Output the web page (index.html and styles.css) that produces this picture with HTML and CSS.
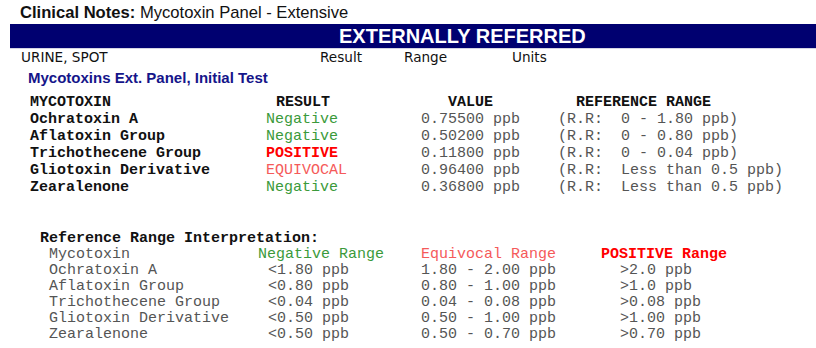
FILE: index.html
```html
<!DOCTYPE html>
<html>
<head>
<meta charset="utf-8">
<link rel="stylesheet" href="styles.css">
</head>
<body>
<div class="title"><b>Clinical Notes:</b> Mycotoxin Panel - Extensive</div>
<div class="banner">EXTERNALLY REFERRED</div>
<div class="specimen">
  <span>URINE, SPOT</span><span>Result</span><span>Range</span><span>Units</span>
</div>
<div class="panel-name">Mycotoxins Ext. Panel, Initial Test</div>

<div class="results">
  <div class="hd">MYCOTOXIN</div><div class="hd hd-result">RESULT</div><div class="hd hd-value">VALUE</div><div class="hd hd-ref">REFERENCE RANGE</div>

  <div class="name">Ochratoxin A</div><div class="neg">Negative</div><div class="val">0.75500 ppb</div><div class="val">(R.R:  0 - 1.80 ppb)</div>
  <div class="name">Aflatoxin Group</div><div class="neg">Negative</div><div class="val">0.50200 ppb</div><div class="val">(R.R:  0 - 0.80 ppb)</div>
  <div class="name">Trichothecene Group</div><div class="pos">POSITIVE</div><div class="val">0.11800 ppb</div><div class="val">(R.R:  0 - 0.04 ppb)</div>
  <div class="name">Gliotoxin Derivative</div><div class="equ">EQUIVOCAL</div><div class="val">0.96400 ppb</div><div class="val">(R.R:  Less than 0.5 ppb)</div>
  <div class="name">Zearalenone</div><div class="neg">Negative</div><div class="val">0.36800 ppb</div><div class="val">(R.R:  Less than 0.5 ppb)</div>
</div>

<div class="interp-title">Reference Range Interpretation:</div>
<div class="interp">
  <div class="g">Mycotoxin</div><div class="neg">Negative Range</div><div class="equ">Equivocal Range</div><div class="pos">POSITIVE Range</div>

  <div class="g">Ochratoxin A</div><div class="g ind1">&lt;1.80 ppb</div><div class="g">1.80 - 2.00 ppb</div><div class="g ind2">&gt;2.0 ppb</div>
  <div class="g">Aflatoxin Group</div><div class="g ind1">&lt;0.80 ppb</div><div class="g">0.80 - 1.00 ppb</div><div class="g ind2">&gt;1.0 ppb</div>
  <div class="g">Trichothecene Group</div><div class="g ind1">&lt;0.04 ppb</div><div class="g">0.04 - 0.08 ppb</div><div class="g ind2">&gt;0.08 ppb</div>
  <div class="g">Gliotoxin Derivative</div><div class="g ind1">&lt;0.50 ppb</div><div class="g">0.50 - 1.00 ppb</div><div class="g ind2">&gt;1.00 ppb</div>
  <div class="g">Zearalenone</div><div class="g ind1">&lt;0.50 ppb</div><div class="g">0.50 - 0.70 ppb</div><div class="g ind2">&gt;0.70 ppb</div>
</div>
</body>
</html>
```

FILE: styles.css
```css
html, body {
  margin: 0;
  padding: 0;
  background: #ffffff;
}

body {
  font-family: "Liberation Sans", Arial, sans-serif;
  color: #000;
}

.title {
  height: 24px;
  line-height: 25px;
  padding-left: 20px;
  font-size: 16.6px;
  color: #111;
}

.banner {
  margin-left: 10px;
  height: 24px;
  line-height: 25px;
  background: #000070;
  color: #fff;
  font-weight: bold;
  font-size: 20px;
  padding-left: 329px;
  border-bottom: 1px solid #d4d4e4;
}

.specimen {
  display: grid;
  grid-template-columns: 299px 84px 108px auto;
  padding-left: 21px;
  height: 17px;
  line-height: 17px;
  margin-top: 0;
  font-family: "DejaVu Sans", Verdana, sans-serif;
  font-size: 13.6px;
  color: #111;
}

.panel-name {
  margin-top: 3px;
  padding-left: 28px;
  height: 17px;
  line-height: 17px;
  font-size: 15px;
  font-weight: bold;
  color: #15158a;
}

.results {
  display: grid;
  grid-template-columns: 236px 155px 137px auto;
  padding-left: 30px;
  margin-top: 8px;
  font-family: "Liberation Mono", "Courier New", monospace;
  font-size: 15px;
  line-height: 17px;
  white-space: pre;
}

.hd {
  font-weight: bold;
  color: #111;
}

.hd-result { padding-left: 10px; }
.hd-value { padding-left: 27px; }
.hd-ref { padding-left: 18px; }

.name {
  font-weight: bold;
  color: #111;
}

.val {
  color: #555;
}

.neg {
  color: #3b9a3b;
}

.pos {
  color: #ff0000;
  font-weight: bold;
}

.equ {
  color: #f55a5a;
}

.interp-title {
  margin-top: 35px;
  padding-left: 40px;
  font-family: "Liberation Mono", "Courier New", monospace;
  font-size: 15px;
  line-height: 16px;
  font-weight: bold;
  color: #111;
}

.interp {
  display: grid;
  grid-template-columns: 209px 163px 180px auto;
  padding-left: 49px;
  font-family: "Liberation Mono", "Courier New", monospace;
  font-size: 15px;
  line-height: 16px;
  white-space: pre;
}

.g {
  color: #555;
}

.ind1 { padding-left: 10px; }
.ind2 { padding-left: 19px; }
```
